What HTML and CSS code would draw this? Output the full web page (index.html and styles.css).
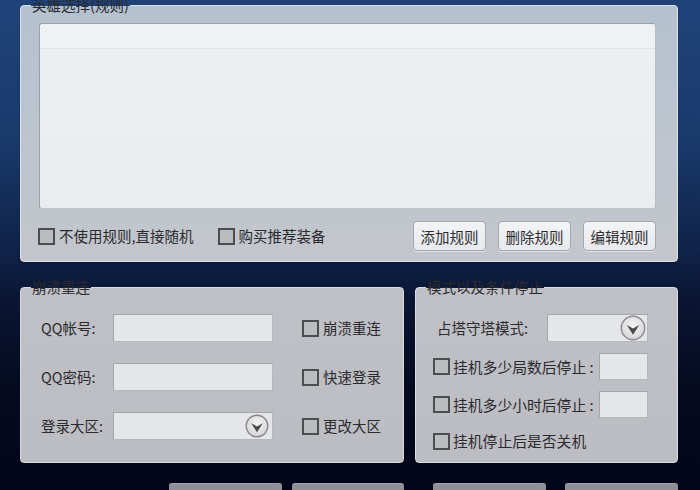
FILE: index.html
```html
<!DOCTYPE html>
<html lang="zh-CN">
<head>
<meta charset="utf-8">
<title>设置</title>
<link rel="stylesheet" href="styles.css">
</head>
<body>
<div class="screen">
  <fieldset class="panel panel-hero">
    <legend>英雄选择(规则)</legend>
    <div class="hero-body">
      <div class="list"><div class="list-head"></div></div>
      <div class="hero-opts">
        <label class="check"><span class="box"></span>不使用规则,直接随机</label>
        <label class="check check-second"><span class="box"></span>购买推荐装备</label>
        <div class="btns">
          <button class="btn">添加规则</button>
          <button class="btn">删除规则</button>
          <button class="btn">编辑规则</button>
        </div>
      </div>
    </div>
  </fieldset>

  <div class="row2">
    <fieldset class="panel panel-grey panel-reconnect">
      <legend>崩溃重连</legend>
      <div class="reconnect-body">
        <span class="lbl">QQ帐号:</span>
        <div class="input"></div>
        <label class="check"><span class="box"></span>崩溃重连</label>

        <span class="lbl">QQ密码:</span>
        <div class="input"></div>
        <label class="check"><span class="box"></span>快速登录</label>

        <span class="lbl">登录大区:</span>
        <div class="input combo">
          <svg class="arrow" viewBox="0 0 24 24" width="24" height="24">
            <defs>
              <radialGradient id="g1" cx="50%" cy="40%" r="60%">
                <stop offset="0" stop-color="#f4f4f4"/>
                <stop offset="1" stop-color="#d6d6d8"/>
              </radialGradient>
            </defs>
            <circle cx="12" cy="12" r="10.8" fill="url(#g1)" stroke="#8b8b8e" stroke-width="1.4"/>
            <path d="M6.2 9.2 L12 18.2 L17.8 9.2 L12 12.4 Z" fill="#4b4b4e"/>
          </svg>
        </div>
        <label class="check"><span class="box"></span>更改大区</label>
      </div>
    </fieldset>

    <fieldset class="panel panel-grey panel-mode">
      <legend>模式以及条件停止</legend>
      <div class="mode-body">
        <div class="mode-row mode-row-first">
          <span class="lbl lbl-mode">占塔守塔模式:</span>
          <div class="input combo combo-mode">
            <svg class="arrow" viewBox="0 0 24 24" width="26" height="26">
              <defs>
                <radialGradient id="g2" cx="50%" cy="40%" r="60%">
                  <stop offset="0" stop-color="#f4f4f4"/>
                  <stop offset="1" stop-color="#d6d6d8"/>
                </radialGradient>
              </defs>
              <circle cx="12" cy="12" r="10.8" fill="url(#g2)" stroke="#8b8b8e" stroke-width="1.3"/>
              <path d="M6.2 9.2 L12 18.2 L17.8 9.2 L12 12.4 Z" fill="#4b4b4e"/>
            </svg>
          </div>
        </div>
        <div class="mode-row mode-row-mid">
          <label class="check check-big"><span class="box"></span>挂机多少局数后停止 :</label>
          <div class="input input-small"></div>
        </div>
        <div class="mode-row mode-row-mid">
          <label class="check check-big"><span class="box"></span>挂机多少小时后停止 :</label>
          <div class="input input-small"></div>
        </div>
        <div class="mode-row mode-row-last">
          <label class="check check-big"><span class="box"></span>挂机停止后是否关机</label>
        </div>
      </div>
    </fieldset>
  </div>

  <div class="bottom">
    <div class="bgroup bgroup-left">
      <div class="bbtn"></div>
      <div class="bbtn bbtn-narrow"></div>
    </div>
    <div class="bgroup bgroup-right">
      <div class="bbtn"></div>
      <div class="bbtn"></div>
    </div>
  </div>
</div>
</body>
</html>
```

FILE: styles.css
```css
* { box-sizing: border-box; }

html, body {
  margin: 0;
  padding: 0;
}

body {
  width: 700px;
  height: 490px;
  overflow: hidden;
  font-family: "Noto Sans CJK SC", "Microsoft YaHei", sans-serif;
  font-size: 14px;
  color: #2b2b2e;
  background: linear-gradient(180deg, #1f4379 0%, #1a3a6c 28%, #10244a 50%, #0a1532 62%, #050a1f 80%, #03061a 100%);
}

.screen {
  width: 700px;
  height: 490px;
  padding: 0 22px 0 20px;
  display: flex;
  flex-direction: column;
}

.panel {
  margin: 0;
  padding: 0;
  min-width: 0;
  border: 1px solid #dfe3e8;
  border-radius: 4px;
  box-shadow: 0 1px 2px rgba(0, 0, 0, 0.35);
}

.panel legend {
  margin-left: 10px;
  padding: 0 1px;
  line-height: 10px;
  font-size: 14.5px;
  color: #2a2a2e;
}

.panel-hero {
  background: linear-gradient(180deg, #b5c1cf 0%, #bcc4ce 45%, #c3c6cc 100%);
}

.hero-body {
  padding: 13px 21px 10px 18px;
}

.list {
  height: 186px;
  background: linear-gradient(180deg, #eeeff1 0%, #eaecee 100%);
  border: 1px solid #9ca1a7;
  border-right-color: #b9bdc2;
  border-bottom-color: #c2c5c9;
  border-radius: 3px;
}

.list-head {
  height: 25px;
  border-bottom: 1px solid #e1e3e5;
  background: #f0f1f2;
  border-radius: 3px 3px 0 0;
}

.hero-opts {
  margin-top: 12px;
  height: 30px;
  display: flex;
  align-items: center;
}

.check {
  display: flex;
  align-items: center;
  gap: 4px;
  line-height: 18px;
  font-size: 14.5px;
  white-space: nowrap;
}

.box {
  width: 17px;
  height: 17px;
  border: 2px solid #4c4d50;
  background: #bbbcbf;
  flex: none;
}

.hero-opts .check:first-child {
  margin-left: -1px;
}

.check-second {
  margin-left: 24px;
}

.btns {
  margin-left: auto;
  display: flex;
  gap: 12px;
}

.btn {
  width: 73px;
  height: 30px;
  padding: 0;
  font-family: inherit;
  font-size: 14.5px;
  color: #2b2b2e;
  background: linear-gradient(180deg, #f3f4f6 0%, #e7e9ec 100%);
  border: 1px solid #a3a8ae;
  border-radius: 4px;
  box-shadow: 0 1px 1px rgba(255, 255, 255, 0.5);
}

.row2 {
  margin-top: 20px;
  display: flex;
  gap: 11px;
}

.panel-grey {
  background: linear-gradient(180deg, #c0c1c6 0%, #bcbdc2 100%);
  border-color: #dcdde1;
}

.panel-reconnect {
  width: 384px;
  flex: none;
}

.panel-mode {
  flex: 1;
}

.reconnect-body {
  padding: 22px 0 22px 20px;
  display: grid;
  grid-template-columns: 72px 160px auto;
  grid-auto-rows: 28px;
  row-gap: 21px;
  column-gap: 0;
  align-items: center;
}

.reconnect-body .check {
  margin-left: 29px;
}

.lbl {
  line-height: 18px;
  font-size: 14.5px;
  white-space: nowrap;
}

.input {
  height: 28px;
  background: #e5e6e9;
  border: 1px solid #a3a5a9;
  border-bottom-color: #b6b8bb;
  border-right-color: #b6b8bb;
}

.combo {
  display: flex;
  align-items: center;
  justify-content: flex-end;
  padding-right: 3px;
}

.arrow {
  display: block;
}

.mode-body {
  padding: 22px 29px 8px 17px;
  display: flex;
  flex-direction: column;
}

.mode-row {
  display: flex;
  align-items: center;
  justify-content: space-between;
}

.mode-row-first {
  height: 28px;
}

.mode-row-mid {
  height: 27px;
  margin-top: 11px;
}

.mode-row-last {
  height: 26px;
  margin-top: 10px;
}

.lbl-mode {
  margin-left: 4px;
}

.combo-mode {
  width: 101px;
  padding-right: 1px;
}

.check-big {
  font-size: 14.8px;
  gap: 3px;
}

.input-small {
  width: 49px;
  height: 27px;
}

.bottom {
  margin-top: 20px;
  display: flex;
}

.bgroup {
  display: flex;
}

.bgroup-left {
  width: 384px;
  justify-content: flex-end;
  gap: 10px;
}

.bgroup-right {
  margin-left: 11px;
  padding-left: 18px;
  gap: 19px;
}

.bbtn {
  width: 113px;
  height: 30px;
  background: linear-gradient(180deg, #8f9198 0%, #85878e 100%);
  border-top: 1px solid #9fa1a8;
  border-radius: 3px 3px 0 0;
}

.bbtn-narrow {
  width: 112px;
}
```
